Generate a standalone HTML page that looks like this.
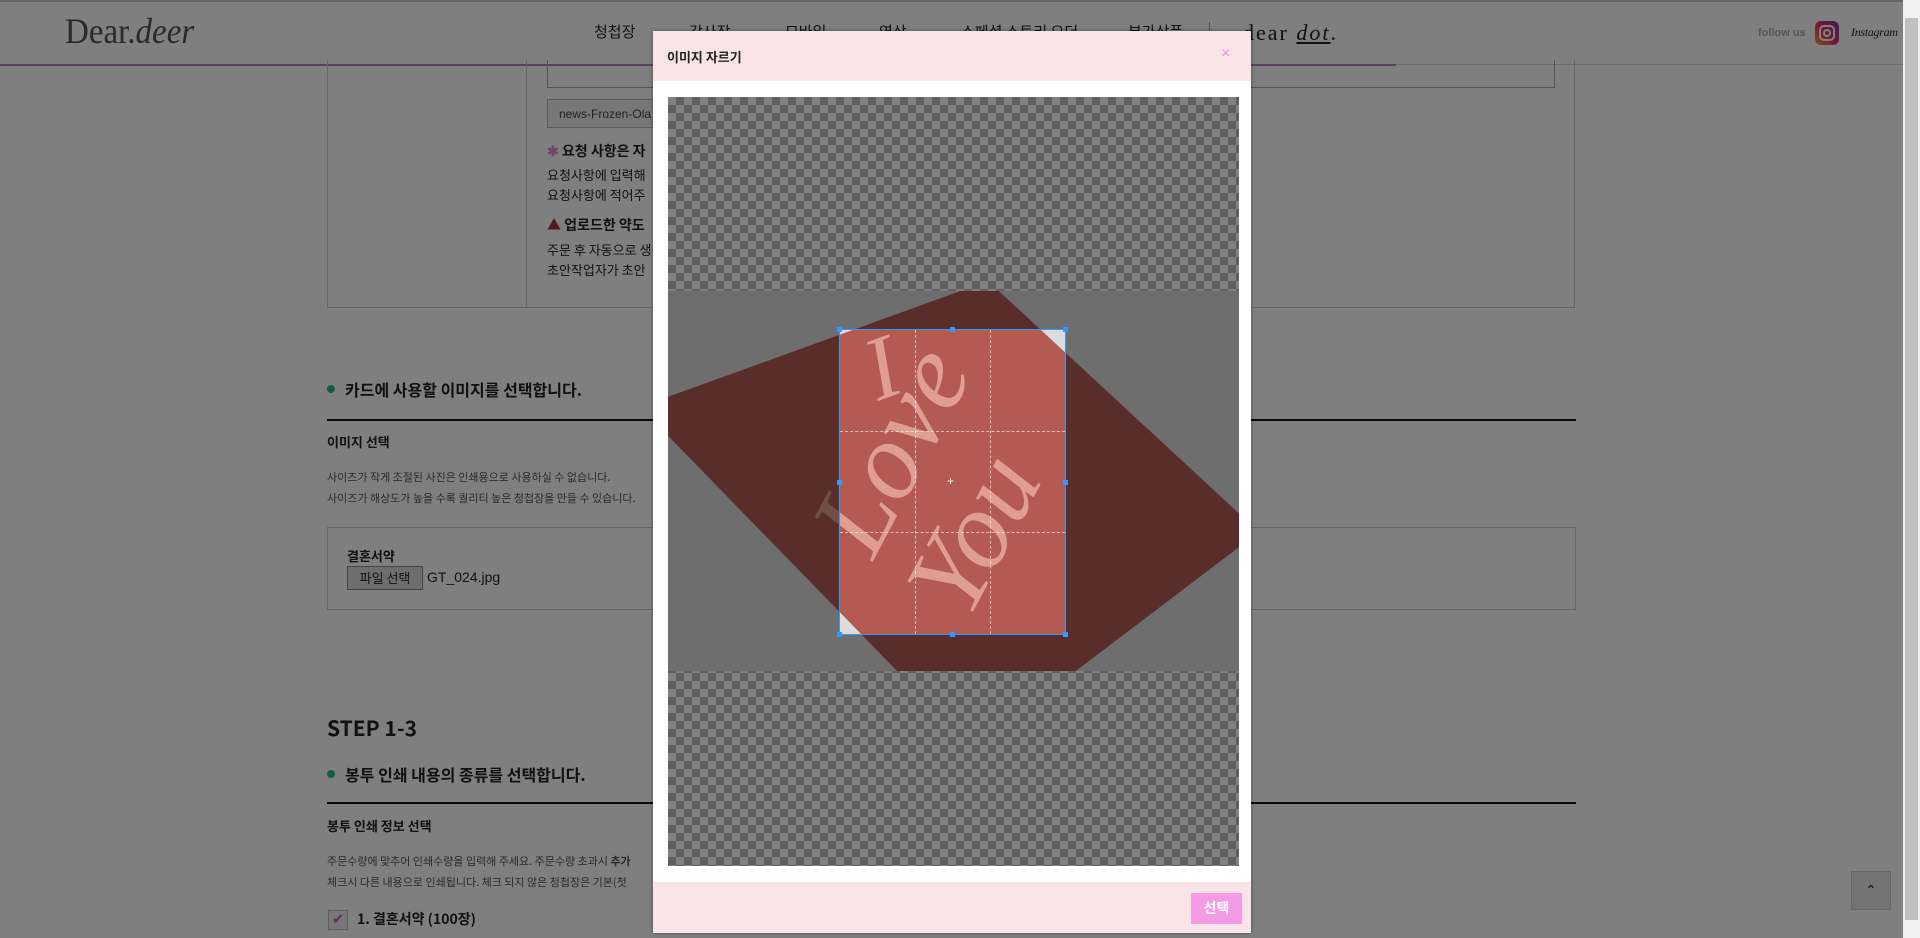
<!DOCTYPE html>
<html><head><meta charset="utf-8">
<style>
*{margin:0;padding:0;box-sizing:border-box}
html,body{width:1920px;height:938px;overflow:hidden;background:#fff;font-family:"Liberation Sans","Noto Sans CJK KR",sans-serif;color:#222;position:relative}
.a{position:absolute;white-space:nowrap}
.kr{font-family:"Noto Sans CJK KR","Liberation Sans",sans-serif}
</style></head><body>
<!-- header -->
<div class="a" style="left:0;top:0;width:1903px;height:2px;background:#ccc"></div>
<div class="a" style="left:0;top:64px;width:1903px;height:1px;background:#ddd"></div>
<div class="a" style="left:0;top:64px;width:1396px;height:2px;background:#c47bc4"></div>
<div class="a" style="left:65px;top:12px;font-family:'Liberation Serif',serif;font-size:33px;color:#555;transform:scaleY(1.1);transform-origin:top left">Dear.<i>deer</i></div>
<div class="a kr" style="left:594px;top:21px;font-size:15px;color:#222">청첩장</div>
<div class="a kr" style="left:689px;top:21px;font-size:15px">감사장</div>
<div class="a kr" style="left:785px;top:21px;font-size:15px">모바일</div>
<div class="a kr" style="left:879px;top:21px;font-size:15px">영상</div>
<div class="a kr" style="left:961px;top:21px;font-size:15px">스페셜 스토리 오더</div>
<div class="a kr" style="left:1128px;top:21px;font-size:15px">부가상품</div>
<div class="a" style="left:1209px;top:22px;width:1px;height:24px;background:#999"></div>
<div class="a" style="left:1243px;top:20px;font-family:'Liberation Serif',serif;font-size:22px;letter-spacing:2px">dear <i style="text-decoration:underline">dot</i>.</div>
<div class="a" style="left:1758px;top:27px;font-size:11px;color:#aaa;font-weight:bold">follow us</div>
<div class="a" style="left:1815px;top:21px;width:24px;height:24px;border-radius:6px;background:linear-gradient(45deg,#f9a03f,#e1306c 50%,#833ab4)"><div style="position:absolute;left:4px;top:4px;width:16px;height:16px;border:2px solid #fff;border-radius:5px"></div><div style="position:absolute;left:8px;top:8px;width:8px;height:8px;border:2px solid #fff;border-radius:50%"></div></div>
<div class="a" style="left:1851px;top:25px;font-family:'Liberation Serif',serif;font-style:italic;font-size:12px;letter-spacing:-0.3px">Instagram</div>
<!-- scrollbar -->
<div class="a" style="left:1903px;top:0;width:17px;height:938px;background:#f0f0f0"></div>
<div class="a" style="left:1905px;top:18px;width:13px;height:902px;background:#c1c1c1"></div>

<!-- page content -->
<div class="a" style="left:327px;top:60px;width:1248px;height:248px;border:1px solid #ccc;border-top:none"></div>
<div class="a" style="left:526px;top:60px;width:1px;height:248px;background:#ccc"></div>
<div class="a" style="left:547px;top:60px;width:1008px;height:28px;border:1px solid #aaa;border-top:none"></div>
<div class="a" style="left:547px;top:99px;width:140px;height:29px;border:1px solid #bbb;background:#eee;font-size:12px;padding:7px 11px;color:#444">news-Frozen-Ola</div>
<div class="a kr" style="left:547px;top:141px;font-size:14px;font-weight:bold"><span style="color:#e48ae0">✱</span> 요청 사항은 자</div>
<div class="a kr" style="left:547px;top:165px;font-size:13px;line-height:20px">요청사항에 입력해<br>요청사항에 적어주</div>
<div class="a kr" style="left:547px;top:215px;font-size:14px;font-weight:bold"><span style="color:#a33">▲</span> 업로드한 약도</div>
<div class="a kr" style="left:547px;top:240px;font-size:13px;line-height:20px">주문 후 자동으로 생<br>초안작업자가 초안</div>

<div class="a" style="left:327px;top:385px;width:8px;height:8px;border-radius:50%;background:#2fb87a"></div>
<div class="a kr" style="left:345px;top:377px;font-size:16px;font-weight:bold">카드에 사용할 이미지를 선택합니다.</div>
<div class="a" style="left:327px;top:419px;width:1249px;height:2px;background:#111"></div>
<div class="a kr" style="left:327px;top:432px;font-size:13px;font-weight:bold">이미지 선택</div>
<div class="a kr" style="left:327px;top:467px;font-size:11px;line-height:21px;color:#555">사이즈가 작게 조절된 사진은 인쇄용으로 사용하실 수 없습니다.<br>사이즈가 해상도가 높을 수록 퀄리티 높은 청첩장을 만들 수 있습니다.</div>
<div class="a" style="left:327px;top:527px;width:1249px;height:83px;border:1px solid #ccc"></div>
<div class="a kr" style="left:347px;top:546px;font-size:13px;font-weight:bold">결혼서약</div>
<div class="a kr" style="left:347px;top:566px;width:76px;height:24px;border:1px solid #888;background:#ddd;font-size:13px;text-align:center;line-height:22px">파일 선택</div>
<div class="a" style="left:427px;top:569px;font-size:14px">GT_024.jpg</div>

<div class="a kr" style="left:327px;top:713px;font-size:21px;font-weight:bold">STEP 1-3</div>
<div class="a" style="left:327px;top:770px;width:8px;height:8px;border-radius:50%;background:#2fb87a"></div>
<div class="a kr" style="left:345px;top:762px;font-size:16px;font-weight:bold">봉투 인쇄 내용의 종류를 선택합니다.</div>
<div class="a" style="left:327px;top:802px;width:1249px;height:2px;background:#111"></div>
<div class="a kr" style="left:327px;top:816px;font-size:13px;font-weight:bold">봉투 인쇄 정보 선택</div>
<div class="a kr" style="left:327px;top:851px;font-size:11px;line-height:21px;color:#555">주문수량에 맞추어 인쇄수량을 입력해 주세요. 주문수량 초과시 <b>추가</b><br>체크시 다른 내용으로 인쇄됩니다. 체크 되지 않은 청첩장은 기본(첫</div>
<div class="a" style="left:328px;top:910px;width:20px;height:20px;border:1px solid #bbb;background:#eee;color:#c060c0;font-size:15px;text-align:center;line-height:18px">✔</div>
<div class="a kr" style="left:357px;top:909px;font-size:14px;font-weight:bold">1. 결혼서약 (100장)</div>
<div class="a" style="left:1851px;top:871px;width:40px;height:39px;background:#e8e8e8;border:1px solid #ccc;text-align:center;line-height:36px;font-size:14px">⌃</div>

<!-- dim overlay -->
<div class="a" style="left:0;top:0;width:1903px;height:938px;background:rgba(0,0,0,.5)"></div>

<!-- modal -->
<div class="a" style="left:653px;top:31px;width:598px;height:902px;background:#fff;box-shadow:0 0 4px rgba(0,0,0,.4)">
 <div class="a" style="left:0;top:0;width:598px;height:50px;background:#f8e4e6"></div>
 <div class="a kr" style="left:14px;top:16px;font-size:13px;font-weight:bold;color:#222">이미지 자르기</div>
 <div class="a" style="left:568px;top:14px;font-size:16px;color:#f08ef0">×</div>
 <div class="a" style="left:15px;top:66px;width:571px;height:769px;background-color:#808080;background-image:linear-gradient(45deg,#5f5f5f 25%,transparent 25%,transparent 75%,#5f5f5f 75%),linear-gradient(45deg,#5f5f5f 25%,transparent 25%,transparent 75%,#5f5f5f 75%);background-size:16px 16px;background-position:0 0,8px 8px"></div>
 <svg class="a" style="left:15px;top:260px" width="571" height="380" viewBox="0 0 571 380">
  <defs><clipPath id="c"><rect x="0" y="0" width="571" height="380"/></clipPath></defs>
  <g clip-path="url(#c)">
   <rect width="571" height="380" fill="#dcdcdc"/>
   <polygon points="-28,116 320,-10 591,241 305,458" fill="#b35a52"/>
   <g font-family="Liberation Serif, serif" font-style="italic" fill="#e7ab9c" opacity=".85">
    <text x="0" y="0" font-size="110" transform="translate(205,270) rotate(-62)">Love</text>
    <text x="0" y="0" font-size="110" transform="translate(300,330) rotate(-62)">You</text>
    <text x="0" y="0" font-size="90" transform="translate(210,110) rotate(-20)">I</text>
   </g>
   <path fill-rule="evenodd" fill="rgba(0,0,0,.5)" d="M0,0H571V380H0Z M172,38V343H398V38Z"/>
  </g>
 </svg>
 <!-- crop box -->
 <div class="a" style="left:186px;top:298px;width:227px;height:306px;border:1px solid #39f">
  <div class="a" style="left:75px;top:0;width:1px;height:304px;border-left:1px dashed rgba(255,255,255,.6)"></div>
  <div class="a" style="left:150px;top:0;width:1px;height:304px;border-left:1px dashed rgba(255,255,255,.6)"></div>
  <div class="a" style="left:0;top:101px;width:225px;height:1px;border-top:1px dashed rgba(255,255,255,.6)"></div>
  <div class="a" style="left:0;top:202px;width:225px;height:1px;border-top:1px dashed rgba(255,255,255,.6)"></div>
  <div class="a" style="left:107px;top:145px;color:#fff;font-size:12px;line-height:12px">+</div>
  <div class="a" style="left:-3px;top:-3px;width:5px;height:5px;background:#39f"></div>
  <div class="a" style="left:110px;top:-3px;width:5px;height:5px;background:#39f"></div>
  <div class="a" style="left:223px;top:-3px;width:5px;height:5px;background:#39f"></div>
  <div class="a" style="left:-3px;top:150px;width:5px;height:5px;background:#39f"></div>
  <div class="a" style="left:223px;top:150px;width:5px;height:5px;background:#39f"></div>
  <div class="a" style="left:-3px;top:302px;width:5px;height:5px;background:#39f"></div>
  <div class="a" style="left:110px;top:302px;width:5px;height:5px;background:#39f"></div>
  <div class="a" style="left:223px;top:302px;width:5px;height:5px;background:#39f"></div>
 </div>
 <div class="a" style="left:0;top:851px;width:598px;height:51px;background:#f8e4e6"></div>
 <div class="a kr" style="left:538px;top:862px;width:51px;height:31px;background:#f59be6;color:#fff;font-size:14px;font-weight:bold;text-align:center;line-height:31px">선택</div>
</div>
</body></html>
